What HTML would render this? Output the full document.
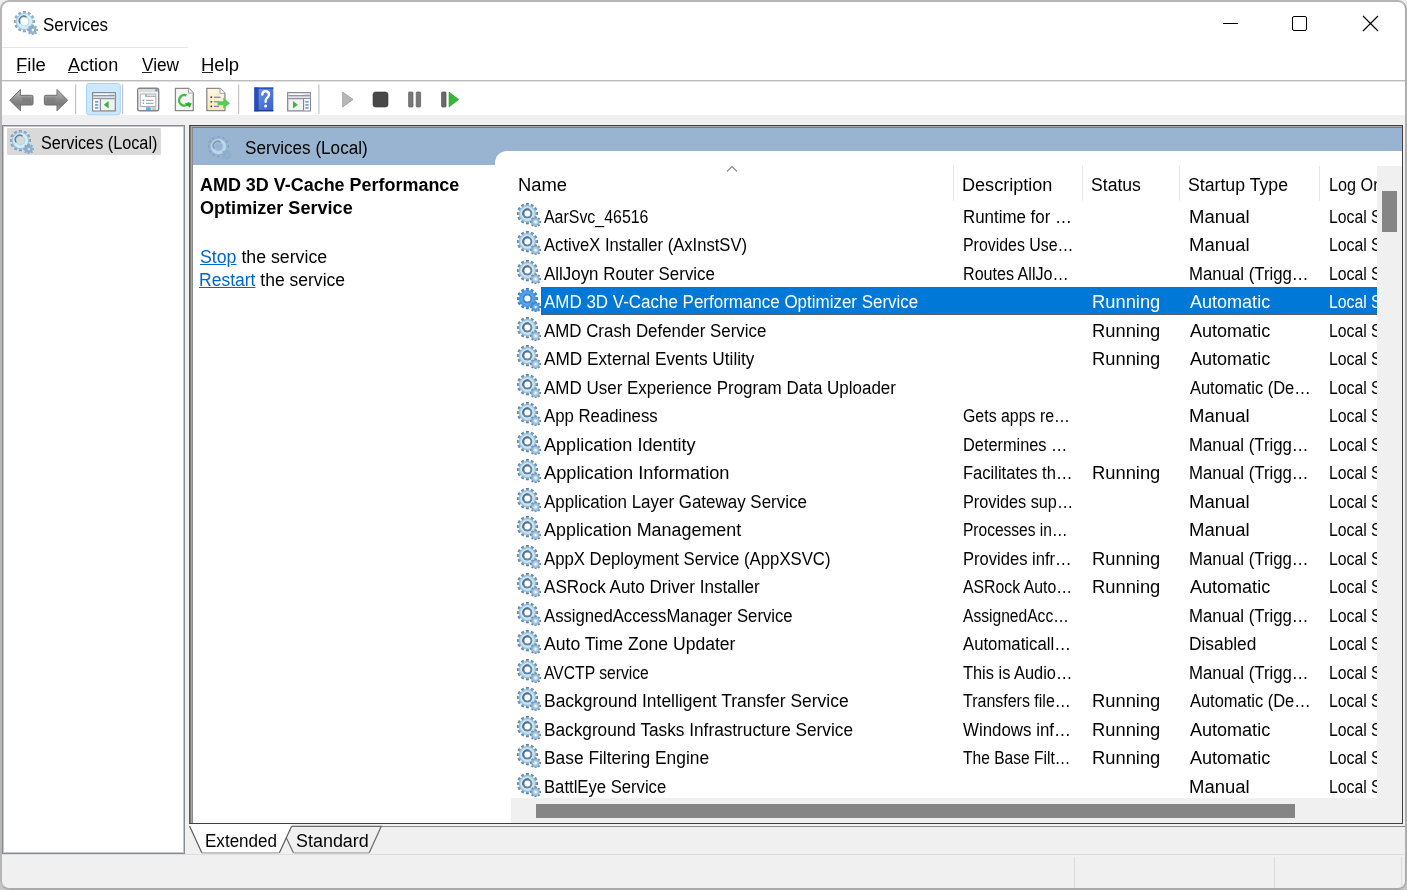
<!DOCTYPE html>
<html><head><meta charset="utf-8">
<style>
html,body{margin:0;padding:0;}
body{width:1407px;height:890px;position:relative;overflow:hidden;background:linear-gradient(#eeeeee,#c6c6c6);font-family:"Liberation Sans",sans-serif;color:#000;}
#win{position:absolute;left:0;top:0;width:1407px;height:890px;border-radius:9px;overflow:hidden;background:#f0f0f0;}
#frame{position:absolute;left:0;top:0;width:1407px;height:890px;box-sizing:border-box;border:2px solid #b6b6b6;border-bottom-color:#a9a9a9;border-right-color:#adadad;border-radius:9px;pointer-events:none;}
.abs{position:absolute;}
.t{position:absolute;white-space:nowrap;font-size:18px;line-height:20px;transform:scaleX(.94);transform-origin:0 0;}
svg.g{position:absolute;}
#titlebar{position:absolute;left:0;top:0;width:1407px;height:81px;background:#fff;}
.ul{position:absolute;height:1px;background:#000;}
.sep{position:absolute;width:1px;background:#cfcfcf;}
#toolbar{position:absolute;left:0;top:82px;width:1407px;height:33px;background:#fff;}
#tree{position:absolute;left:2px;top:125px;width:183px;height:729px;box-sizing:border-box;border:1px solid #868c96;box-shadow:inset 0 0 0 1px #c4c8ce;background:#fff;}
#rp{position:absolute;left:189px;top:125px;width:1214px;height:699px;box-sizing:border-box;border:1px solid #3f3f3f;border-left-color:#5a5a5a;background:#fff;}
#rpin{position:absolute;left:0;top:0;right:0;bottom:0;border-left:2px solid #a0a0a0;border-top:2px solid #a0a0a0;box-shadow:inset 1px 1px 0 #8a8a8a;}
#hdr{position:absolute;left:193px;top:128px;width:1209px;height:37px;background:#99b4d1;}
#tabw{position:absolute;left:495px;top:151px;width:907px;height:672px;background:#fff;border-top-left-radius:12px;}
.colhd{position:absolute;top:166px;height:35px;width:1px;background:#e5e5e5;}
#list{position:absolute;left:511px;top:0;width:866px;height:798px;overflow:hidden;}
.row{position:absolute;left:0;width:866px;height:28.5px;}
.ricon{position:absolute;left:6px;top:1px;}
.row .c{position:absolute;top:5px;white-space:nowrap;font-size:18px;line-height:20px;transform:scaleX(.94);transform-origin:0 0;}
.cn{left:33px;}
.cd{left:452px;}
.cs{left:581px;}
.ct{left:677.5px;}
.cl{left:818px;transform:scaleX(.877)!important;}
.hl{position:absolute;left:30px;top:0;width:840px;height:28px;background:#0078d7;box-sizing:border-box;border:1px dotted #5a5a5a;}
.sel .c{color:#fff;}
#vs{position:absolute;left:1377px;top:166px;width:25px;height:632px;background:#f0f0f0;}
#vthumb{position:absolute;left:1382px;top:191px;width:15px;height:41px;background:#858585;}
#hs{position:absolute;left:511px;top:798px;width:891px;height:25px;background:#f0f0f0;}
#hthumb{position:absolute;left:536px;top:804px;width:759px;height:14px;background:#858585;}
a{color:#0066cc;text-decoration:underline;}
</style></head><body>
<svg width="0" height="0" style="position:absolute">
<defs>
<radialGradient id="gb" gradientUnits="userSpaceOnUse" cx="10.4" cy="10.6" r="10.7">
<stop offset="0" stop-color="#ffffff"/><stop offset="0.48" stop-color="#d4eefa"/><stop offset="0.64" stop-color="#bde0f1"/><stop offset="0.8" stop-color="#84a8c8"/><stop offset="1" stop-color="#4a709a"/>
</radialGradient>
<radialGradient id="gs" gradientUnits="userSpaceOnUse" cx="18.6" cy="19.0" r="5.5">
<stop offset="0" stop-color="#ffffff"/><stop offset="0.25" stop-color="#c4dcec"/><stop offset="0.7" stop-color="#86a8c8"/><stop offset="1" stop-color="#4a709a"/>
</radialGradient>
<radialGradient id="gsel" gradientUnits="userSpaceOnUse" cx="10.4" cy="10.6" r="10.7">
<stop offset="0" stop-color="#ffffff"/><stop offset="0.5" stop-color="#5fa8ea"/><stop offset="0.8" stop-color="#3f90dc"/><stop offset="1" stop-color="#2a78c8"/>
</radialGradient>
<radialGradient id="gssel" gradientUnits="userSpaceOnUse" cx="18.6" cy="19.0" r="5.5">
<stop offset="0" stop-color="#ffffff"/><stop offset="0.3" stop-color="#6aaee8"/><stop offset="1" stop-color="#2a78c8"/>
</radialGradient>
<g id="gear">
<path d="M8.94,2.33 L8.91,0.00 L11.89,0.00 L11.86,2.33 L13.27,2.71 L14.41,0.68 L16.99,2.17 L15.80,4.17 L16.83,5.20 L18.83,4.01 L20.32,6.59 L18.29,7.73 L18.67,9.14 L21.00,9.11 L21.00,12.09 L18.67,12.06 L18.29,13.47 L20.32,14.61 L18.83,17.19 L16.83,16.00 L15.80,17.03 L16.99,19.03 L14.41,20.52 L13.27,18.49 L11.86,18.87 L11.89,21.20 L8.91,21.20 L8.94,18.87 L7.53,18.49 L6.39,20.52 L3.81,19.03 L5.00,17.03 L3.97,16.00 L1.97,17.19 L0.48,14.61 L2.51,13.47 L2.13,12.06 L-0.20,12.09 L-0.20,9.11 L2.13,9.14 L2.51,7.73 L0.48,6.59 L1.97,4.01 L3.97,5.20 L5.00,4.17 L3.81,2.17 L6.39,0.68 L7.53,2.71Z" fill="url(#gb)"/>
<circle cx="10.4" cy="10.6" r="5" fill="#6584a4"/>
<path d="M6.2,12.2 A4.6,4.6 0 0 1 12,6.2" fill="none" stroke="#4e6684" stroke-width="1.2"/>
<circle cx="10.4" cy="10.6" r="3" fill="#fff"/>
<path d="M17.46,15.27 L17.64,13.58 L19.56,13.58 L19.74,15.27 L20.43,15.56 L21.75,14.49 L23.11,15.85 L22.04,17.17 L22.33,17.86 L24.02,18.04 L24.02,19.96 L22.33,20.14 L22.04,20.83 L23.11,22.15 L21.75,23.51 L20.43,22.44 L19.74,22.73 L19.56,24.42 L17.64,24.42 L17.46,22.73 L16.77,22.44 L15.45,23.51 L14.09,22.15 L15.16,20.83 L14.87,20.14 L13.18,19.96 L13.18,18.04 L14.87,17.86 L15.16,17.17 L14.09,15.85 L15.45,14.49 L16.77,15.56Z" fill="url(#gs)"/>
<circle cx="18.6" cy="19.0" r="0.9" fill="#fff"/>
</g>
<g id="gearsel">
<path d="M8.94,2.33 L8.91,0.00 L11.89,0.00 L11.86,2.33 L13.27,2.71 L14.41,0.68 L16.99,2.17 L15.80,4.17 L16.83,5.20 L18.83,4.01 L20.32,6.59 L18.29,7.73 L18.67,9.14 L21.00,9.11 L21.00,12.09 L18.67,12.06 L18.29,13.47 L20.32,14.61 L18.83,17.19 L16.83,16.00 L15.80,17.03 L16.99,19.03 L14.41,20.52 L13.27,18.49 L11.86,18.87 L11.89,21.20 L8.91,21.20 L8.94,18.87 L7.53,18.49 L6.39,20.52 L3.81,19.03 L5.00,17.03 L3.97,16.00 L1.97,17.19 L0.48,14.61 L2.51,13.47 L2.13,12.06 L-0.20,12.09 L-0.20,9.11 L2.13,9.14 L2.51,7.73 L0.48,6.59 L1.97,4.01 L3.97,5.20 L5.00,4.17 L3.81,2.17 L6.39,0.68 L7.53,2.71Z" fill="url(#gsel)"/>
<circle cx="10.4" cy="10.6" r="5" fill="#3c86d2"/>
<circle cx="10.4" cy="10.6" r="3" fill="#fff"/>
<path d="M17.46,15.27 L17.64,13.58 L19.56,13.58 L19.74,15.27 L20.43,15.56 L21.75,14.49 L23.11,15.85 L22.04,17.17 L22.33,17.86 L24.02,18.04 L24.02,19.96 L22.33,20.14 L22.04,20.83 L23.11,22.15 L21.75,23.51 L20.43,22.44 L19.74,22.73 L19.56,24.42 L17.64,24.42 L17.46,22.73 L16.77,22.44 L15.45,23.51 L14.09,22.15 L15.16,20.83 L14.87,20.14 L13.18,19.96 L13.18,18.04 L14.87,17.86 L15.16,17.17 L14.09,15.85 L15.45,14.49 L16.77,15.56Z" fill="url(#gssel)"/>
<circle cx="18.6" cy="19.0" r="0.9" fill="#fff"/>
</g>
<mask id="hm" maskUnits="userSpaceOnUse" x="0" y="0" width="24" height="24"><rect width="24" height="24" fill="#fff"/><circle cx="10.5" cy="10.5" r="3.8" fill="#000"/><circle cx="18.9" cy="19.1" r="1.3" fill="#000"/></mask>
<radialGradient id="g2b" gradientUnits="userSpaceOnUse" cx="10.5" cy="10.5" r="10.5">
<stop offset="0" stop-color="#a8c4dc"/><stop offset="0.6" stop-color="#b8dcee"/><stop offset="0.8" stop-color="#8fb2d2"/><stop offset="1" stop-color="#6488b0"/>
</radialGradient>
<g id="gear2" mask="url(#hm)">
<path d="M8.94,2.33 L8.91,0.00 L11.89,0.00 L11.86,2.33 L13.27,2.71 L14.41,0.68 L16.99,2.17 L15.80,4.17 L16.83,5.20 L18.83,4.01 L20.32,6.59 L18.29,7.73 L18.67,9.14 L21.00,9.11 L21.00,12.09 L18.67,12.06 L18.29,13.47 L20.32,14.61 L18.83,17.19 L16.83,16.00 L15.80,17.03 L16.99,19.03 L14.41,20.52 L13.27,18.49 L11.86,18.87 L11.89,21.20 L8.91,21.20 L8.94,18.87 L7.53,18.49 L6.39,20.52 L3.81,19.03 L5.00,17.03 L3.97,16.00 L1.97,17.19 L0.48,14.61 L2.51,13.47 L2.13,12.06 L-0.20,12.09 L-0.20,9.11 L2.13,9.14 L2.51,7.73 L0.48,6.59 L1.97,4.01 L3.97,5.20 L5.00,4.17 L3.81,2.17 L6.39,0.68 L7.53,2.71Z" fill="url(#g2b)" fill-opacity="0.85"/>
<circle cx="10.5" cy="10.5" r="6.3" fill="none" stroke="#d2f0fa" stroke-width="2.6"/>
<path d="M6.3,12.5 A4.4,4.4 0 0 1 12.5,6.3" fill="none" stroke="#66788a" stroke-width="1.4"/>
<path d="M17.46,15.27 L17.64,13.58 L19.56,13.58 L19.74,15.27 L20.43,15.56 L21.75,14.49 L23.11,15.85 L22.04,17.17 L22.33,17.86 L24.02,18.04 L24.02,19.96 L22.33,20.14 L22.04,20.83 L23.11,22.15 L21.75,23.51 L20.43,22.44 L19.74,22.73 L19.56,24.42 L17.64,24.42 L17.46,22.73 L16.77,22.44 L15.45,23.51 L14.09,22.15 L15.16,20.83 L14.87,20.14 L13.18,19.96 L13.18,18.04 L14.87,17.86 L15.16,17.17 L14.09,15.85 L15.45,14.49 L16.77,15.56Z" fill="#86a8c8" fill-opacity="0.9"/>
</g>
</defs>
</svg>
<div id="win">
<div id="titlebar"></div>
<svg class="g" style="left:14px;top:11px" width="24" height="24" viewBox="0 0 24 24"><use href="#gear2"/></svg>
<div class="t" style="left:43px;top:14.7px;transform:scaleX(.943)">Services</div>
<!-- window controls -->
<div class="abs" style="left:1223px;top:23px;width:15px;height:1px;background:#000"></div>
<div class="abs" style="left:1292px;top:16px;width:15px;height:15px;box-sizing:border-box;border:1px solid #000;border-radius:2px"></div>
<svg class="g" style="left:1362px;top:15px" width="17" height="17" viewBox="0 0 17 17"><path d="M1,1 L16,16 M16,1 L1,16" stroke="#000" stroke-width="1.2"/></svg>
<div class="abs" style="left:2px;top:47px;width:186px;height:1px;background:#e6e6e6"></div>
<!-- menu -->
<div class="t" style="left:16px;top:54.7px;transform:scaleX(1.03)">File</div>
<div class="t" style="left:68px;top:54.7px;transform:scaleX(1.003)">Action</div>
<div class="t" style="left:141.5px;top:54.7px;transform:scaleX(.956)">View</div>
<div class="t" style="left:201px;top:54.7px;transform:scaleX(1.028)">Help</div>
<div class="ul" style="left:17px;top:72px;width:9px;background:#222"></div>
<div class="ul" style="left:68px;top:72px;width:10px;background:#222"></div>
<div class="ul" style="left:142px;top:72px;width:10px;background:#222"></div>
<div class="ul" style="left:202px;top:72px;width:11px;background:#222"></div>
<div class="abs" style="left:0;top:80px;width:1407px;height:1px;background:#bcbcbc"></div>
<div class="abs" style="left:0;top:81px;width:1407px;height:1px;background:#e2e2e2"></div>
<div id="toolbar"></div>
<svg class="g" style="left:0;top:82px" width="480" height="34" viewBox="0 82 480 34">
<defs>
<linearGradient id="arr" x1="0" y1="0" x2="0" y2="1"><stop offset="0" stop-color="#c4c4c4"/><stop offset="0.45" stop-color="#8e8e8e"/><stop offset="0.7" stop-color="#7a7a7a"/><stop offset="1" stop-color="#a8a8a8"/></linearGradient>
<linearGradient id="hlp" x1="0" y1="0" x2="1" y2="1"><stop offset="0" stop-color="#6e97e8"/><stop offset="1" stop-color="#3560c8"/></linearGradient>
<linearGradient id="pg" x1="0" y1="0" x2="0" y2="1"><stop offset="0" stop-color="#fdf8e4"/><stop offset="1" stop-color="#f6e8b8"/></linearGradient>
</defs>
<!-- back arrow -->
<path d="M9.8,100.2 L20.4,89.5 L20.4,95.3 L31.6,95.3 Q33,95.3 33,96.7 L33,103.6 Q33,105 31.6,105 L20.4,105 L20.4,110.8 Z" fill="url(#arr)" stroke="#6c6c6c" stroke-width="1" stroke-linejoin="round"/>
<path d="M22,97.5 L31,97.5 L31,102.5 L22,102.5 Z" fill="#707070" opacity="0.45"/>
<!-- forward arrow -->
<path d="M67.6,100.2 L57,89.5 L57,95.3 L45.8,95.3 Q44.4,95.3 44.4,96.7 L44.4,103.6 Q44.4,105 45.8,105 L57,105 L57,110.8 Z" fill="url(#arr)" stroke="#6c6c6c" stroke-width="1" stroke-linejoin="round"/>
<path d="M46.5,97.5 L55.5,97.5 L55.5,102.5 L46.5,102.5 Z" fill="#707070" opacity="0.35"/>
<rect x="75" y="84.5" width="1.2" height="29.5" fill="#c4c4c4"/>
<!-- highlighted button -->
<rect x="86.5" y="83.5" width="33.8" height="31.3" rx="2.5" fill="#cce8ff" stroke="#a4d4fb" stroke-width="1"/>
<!-- icon1: console tree -->
<rect x="92.7" y="92.7" width="22.6" height="18.2" fill="#f2f2f2" stroke="#7c838e" stroke-width="1.2"/>
<rect x="93.3" y="93.3" width="21.4" height="5.4" fill="#dfe3e8"/>
<rect x="93.3" y="95.2" width="21.4" height="1" fill="#7c838e"/>
<rect x="93.3" y="98.2" width="21.4" height="1" fill="#7c838e"/>
<rect x="94.5" y="93.9" width="14" height="0.9" fill="#ffffff"/>
<rect x="93.3" y="99.2" width="6.5" height="11.1" fill="#fafafa"/>
<rect x="99.8" y="99.2" width="1.1" height="11.2" fill="#7c838e"/>
<rect x="95" y="101.2" width="3.3" height="1.3" fill="#4a7fc8"/>
<rect x="95" y="104.3" width="3.3" height="1.3" fill="#4a7fc8"/>
<rect x="95" y="107.3" width="3.3" height="1.3" fill="#4a7fc8"/>
<path d="M103.8,104.8 L108.6,101 L108.6,108.6 Z" fill="#3cb43c"/>
<rect x="122" y="84.5" width="1.2" height="29.5" fill="#c4c4c4"/>
<!-- icon2: properties -->
<rect x="137.7" y="88.2" width="21" height="22.6" rx="2" fill="#f4f4f4" stroke="#858585" stroke-width="1.4"/>
<rect x="138.5" y="89" width="19.4" height="3" fill="#dcdcdc"/>
<rect x="155.5" y="89.3" width="2" height="2" fill="#5a7ab8"/>
<path d="M140.3,94 L145.5,94 L145.5,96.5 L155.8,96.5 L155.8,106.5 L140.3,106.5 Z" fill="#fff" stroke="#a9acb8" stroke-width="1"/>
<rect x="146.3" y="94" width="9.5" height="2.5" fill="#dfe2ea" stroke="#a9acb8" stroke-width="0.8"/>
<circle cx="143.5" cy="100.3" r="0.9" fill="#34b8f0"/>
<rect x="146" y="99.8" width="7.5" height="1" fill="#9a9a9a"/>
<circle cx="143.5" cy="103.3" r="0.7" fill="#8a8a8a"/>
<rect x="146" y="102.8" width="7.5" height="1" fill="#9a9a9a"/>
<rect x="146" y="107.2" width="4.8" height="2.8" fill="#38c0f0"/>
<rect x="151.5" y="107.2" width="4.5" height="2.8" fill="#c8c8c8"/>
<!-- icon3: refresh -->
<path d="M175.4,88.4 L188.6,88.4 L193.3,93.1 L193.3,110.6 L175.4,110.6 Z" fill="#f6f6f6" stroke="#8a8a8a" stroke-width="1.3"/>
<path d="M188.6,88.4 L188.6,93.1 L193.3,93.1" fill="#fff" stroke="#9a9a9a" stroke-width="0.9"/>
<path d="M189.2,102.5 A5.3,5.3 0 1 1 186.5,95.4" fill="none" stroke="#3cbf3c" stroke-width="2.4"/>
<path d="M184.5,103.2 L191.8,103.2 L189.8,107.6 Z" fill="#22b022"/>
<!-- icon4: export -->
<path d="M206.8,88.4 L220,88.4 L224.9,93.3 L224.9,110.6 L206.8,110.6 Z" fill="url(#pg)" stroke="#8a8a8a" stroke-width="1.3"/>
<path d="M220,88.4 L220,93.3 L224.9,93.3" fill="#fff" stroke="#9a9a9a" stroke-width="0.9"/>
<circle cx="211.3" cy="97.2" r="0.9" fill="#333"/><rect x="214" y="96.7" width="6.5" height="1.1" fill="#7a74a8"/>
<circle cx="211.3" cy="101.8" r="0.9" fill="#333"/><rect x="214" y="101.3" width="5" height="1.1" fill="#7a74a8"/>
<circle cx="211.3" cy="106.3" r="0.9" fill="#333"/><rect x="214" y="105.8" width="5" height="1.1" fill="#7a74a8"/>
<path d="M217.5,101.3 L223.3,101.3 L223.3,97.8 L230,103.2 L223.3,108.6 L223.3,105.2 L217.5,105.2 Z" fill="#58cc58"/>
<rect x="238" y="84.5" width="1.2" height="29.5" fill="#c4c4c4"/>
<!-- help -->
<rect x="254.3" y="87.5" width="19" height="23.8" fill="url(#hlp)"/>
<rect x="254.3" y="87.5" width="4.3" height="23.8" fill="#2c4cb4"/>
<rect x="254.3" y="87.5" width="19" height="1.3" fill="#2244c4"/>
<rect x="254.3" y="110" width="19" height="1.3" fill="#2a3a80"/>
<path d="M262.3,94.5 Q262.6,91.3 265.6,91.3 Q269,91.3 269,94.6 Q269,96.6 266.8,98.2 Q265.6,99.2 265.6,101.8" fill="none" stroke="#fff" stroke-width="2.4" stroke-linecap="round"/>
<circle cx="265.6" cy="106" r="1.5" fill="#fff"/>
<!-- icon6 -->
<rect x="287.7" y="92.7" width="22.6" height="18.2" fill="#f2f2f2" stroke="#7c838e" stroke-width="1.2"/>
<rect x="288.3" y="93.3" width="21.4" height="5.4" fill="#dfe3e8"/>
<rect x="288.3" y="95.2" width="21.4" height="1" fill="#7c838e"/>
<rect x="288.3" y="98.2" width="21.4" height="1" fill="#7c838e"/>
<rect x="289.5" y="93.9" width="14" height="0.9" fill="#ffffff"/>
<rect x="303.8" y="99.2" width="6" height="11.1" fill="#fafafa"/>
<rect x="303" y="99.2" width="1.1" height="11.2" fill="#7c838e"/>
<rect x="305.3" y="101.2" width="3.3" height="1.3" fill="#4a7fc8"/>
<rect x="305.3" y="104.3" width="3.3" height="1.3" fill="#4a7fc8"/>
<rect x="305.3" y="107.3" width="3.3" height="1.3" fill="#4a7fc8"/>
<path d="M293,101 L297.8,104.8 L293,108.6 Z" fill="#3cb43c"/>
<rect x="318.3" y="84.5" width="1.2" height="29.5" fill="#c4c4c4"/>
<!-- play gray -->
<path d="M342.6,92 L353,99.5 L342.6,107 Z" fill="#b8b8b8" stroke="#9c9c9c" stroke-width="0.8" stroke-linejoin="round"/>
<!-- stop -->
<rect x="373" y="92" width="15" height="15" rx="2.5" fill="#484848" stroke="#383838" stroke-width="0.6"/>
<!-- pause -->
<rect x="408.6" y="92" width="4.4" height="15" rx="0.8" fill="#787878" stroke="#5c5c5c" stroke-width="0.7"/>
<rect x="416.2" y="92" width="4.4" height="15" rx="0.8" fill="#787878" stroke="#5c5c5c" stroke-width="0.7"/>
<!-- restart -->
<rect x="441.6" y="92" width="4.4" height="15" rx="0.8" fill="#6a6a6a" stroke="#4c4c4c" stroke-width="0.7"/>
<path d="M449,92 L458.8,99.5 L449,107 Z" fill="#36b836" stroke="#26a326" stroke-width="0.6" stroke-linejoin="round"/>
</svg>

<!-- tree -->
<div id="tree"></div>
<div class="abs" style="left:7px;top:128px;width:154px;height:27px;background:#d9d9d9;border-radius:1px"></div>
<svg class="g" style="left:9.5px;top:129.5px" width="24" height="24" viewBox="0 0 24 24"><use href="#gear2"/></svg>
<div class="t" style="left:41px;top:133.2px;transform:scaleX(.902)">Services (Local)</div>
<!-- right panel -->
<div id="rp"></div>
<div class="abs" style="left:190px;top:126px;width:1212px;height:1px;background:#a8a8a8"></div>
<div class="abs" style="left:191px;top:127px;width:1211px;height:1px;background:#7c7c7c"></div>
<div class="abs" style="left:190px;top:126px;width:1px;height:697px;background:#7a7a7a"></div>
<div class="abs" style="left:191px;top:127px;width:1px;height:696px;background:#a8a8a8"></div>
<div class="abs" style="left:192px;top:128px;width:1px;height:695px;background:#8a8a8a"></div>
<div id="hdr"></div>
<svg class="g" style="left:207.5px;top:135.5px;opacity:0.6" width="24" height="24" viewBox="0 0 24 24"><use href="#gear2"/></svg>
<div class="t" style="left:245px;top:137.7px;transform:scaleX(.951)">Services (Local)</div>
<div id="tabw"></div>
<div class="t" style="left:200px;top:174.7px;font-weight:bold;transform:scaleX(.997)">AMD 3D V-Cache Performance</div>
<div class="t" style="left:200px;top:197.6px;font-weight:bold;transform:scaleX(1.004)">Optimizer Service</div>
<div class="t" style="left:200px;top:247.2px;transform:scaleX(.985)"><a>Stop</a> the service</div>
<div class="t" style="left:198.5px;top:269.5px;transform:scaleX(.973)"><a>Restart</a> the service</div>
<!-- list header -->
<div class="t" style="left:518px;top:174.6px;transform:scaleX(1.02)">Name</div>
<div class="t" style="left:962px;top:174.6px;transform:scaleX(1.004)">Description</div>
<div class="t" style="left:1091px;top:174.6px;transform:scaleX(.978)">Status</div>
<div class="t" style="left:1188px;top:174.6px;transform:scaleX(.983)">Startup Type</div>
<div class="abs" style="left:1329px;top:170px;width:48px;height:30px;overflow:hidden"><div class="t" style="left:0;top:4.6px;transform:scaleX(.9)">Log On As</div></div>
<svg class="g" style="left:726px;top:165px" width="12" height="8" viewBox="0 0 12 8"><path d="M1,6.5 L6,1.5 L11,6.5" fill="none" stroke="#8a8a8a" stroke-width="1.1"/></svg>
<div class="colhd" style="left:953px"></div>
<div class="colhd" style="left:1082px"></div>
<div class="colhd" style="left:1179px"></div>
<div class="colhd" style="left:1319px"></div>
<div id="list">
<div class="row" style="top:201.70px"><svg class="ricon" width="24" height="24" viewBox="0 0 24 24"><use href="#gear"/></svg><span class="c cn" style="transform:scaleX(0.8845)">AarSvc_46516</span><span class="c cd" style="transform:scaleX(0.9382)">Runtime for …</span><span class="c ct" style="transform:scaleX(1.0270)">Manual</span><span class="c cl">Local S</span></div>
<div class="row" style="top:230.20px"><svg class="ricon" width="24" height="24" viewBox="0 0 24 24"><use href="#gear"/></svg><span class="c cn" style="transform:scaleX(0.9227)">ActiveX Installer (AxInstSV)</span><span class="c cd" style="transform:scaleX(0.8839)">Provides Use…</span><span class="c ct" style="transform:scaleX(1.0270)">Manual</span><span class="c cl">Local S</span></div>
<div class="row" style="top:258.70px"><svg class="ricon" width="24" height="24" viewBox="0 0 24 24"><use href="#gear"/></svg><span class="c cn" style="transform:scaleX(0.9389)">AllJoyn Router Service</span><span class="c cd" style="transform:scaleX(0.8947)">Routes AllJo…</span><span class="c ct" style="transform:scaleX(0.9320)">Manual (Trigg…</span><span class="c cl">Local S</span></div>
<div class="row sel" style="top:287.20px"><svg class="ricon" width="24" height="24" viewBox="0 0 24 24"><use href="#gearsel"/></svg><div class="hl"></div><span class="c cn" style="transform:scaleX(0.9425)">AMD 3D V-Cache Performance Optimizer Service</span><span class="c cs" style="transform:scaleX(1.0186)">Running</span><span class="c ct" style="left:679px;transform:scaleX(1.0014)">Automatic</span><span class="c cl">Local S</span></div>
<div class="row" style="top:315.70px"><svg class="ricon" width="24" height="24" viewBox="0 0 24 24"><use href="#gear"/></svg><span class="c cn" style="transform:scaleX(0.9375)">AMD Crash Defender Service</span><span class="c cs" style="transform:scaleX(1.0186)">Running</span><span class="c ct" style="left:679px;transform:scaleX(1.0014)">Automatic</span><span class="c cl">Local S</span></div>
<div class="row" style="top:344.20px"><svg class="ricon" width="24" height="24" viewBox="0 0 24 24"><use href="#gear"/></svg><span class="c cn" style="transform:scaleX(0.9563)">AMD External Events Utility</span><span class="c cs" style="transform:scaleX(1.0186)">Running</span><span class="c ct" style="left:679px;transform:scaleX(1.0014)">Automatic</span><span class="c cl">Local S</span></div>
<div class="row" style="top:372.70px"><svg class="ricon" width="24" height="24" viewBox="0 0 24 24"><use href="#gear"/></svg><span class="c cn" style="transform:scaleX(0.9432)">AMD User Experience Program Data Uploader</span><span class="c ct" style="left:679px;transform:scaleX(0.9138)">Automatic (De…</span><span class="c cl">Local S</span></div>
<div class="row" style="top:401.20px"><svg class="ricon" width="24" height="24" viewBox="0 0 24 24"><use href="#gear"/></svg><span class="c cn" style="transform:scaleX(0.9309)">App Readiness</span><span class="c cd" style="transform:scaleX(0.8833)">Gets apps re…</span><span class="c ct" style="transform:scaleX(1.0270)">Manual</span><span class="c cl">Local S</span></div>
<div class="row" style="top:429.70px"><svg class="ricon" width="24" height="24" viewBox="0 0 24 24"><use href="#gear"/></svg><span class="c cn" style="transform:scaleX(1.0035)">Application Identity</span><span class="c cd" style="transform:scaleX(0.9078)">Determines …</span><span class="c ct" style="transform:scaleX(0.9320)">Manual (Trigg…</span><span class="c cl">Local S</span></div>
<div class="row" style="top:458.20px"><svg class="ricon" width="24" height="24" viewBox="0 0 24 24"><use href="#gear"/></svg><span class="c cn" style="transform:scaleX(1.0131)">Application Information</span><span class="c cd" style="transform:scaleX(0.9193)">Facilitates th…</span><span class="c cs" style="transform:scaleX(1.0186)">Running</span><span class="c ct" style="transform:scaleX(0.9320)">Manual (Trigg…</span><span class="c cl">Local S</span></div>
<div class="row" style="top:486.70px"><svg class="ricon" width="24" height="24" viewBox="0 0 24 24"><use href="#gear"/></svg><span class="c cn" style="transform:scaleX(0.9418)">Application Layer Gateway Service</span><span class="c cd" style="transform:scaleX(0.9022)">Provides sup…</span><span class="c ct" style="transform:scaleX(1.0270)">Manual</span><span class="c cl">Local S</span></div>
<div class="row" style="top:515.20px"><svg class="ricon" width="24" height="24" viewBox="0 0 24 24"><use href="#gear"/></svg><span class="c cn" style="transform:scaleX(0.9956)">Application Management</span><span class="c cd" style="transform:scaleX(0.8629)">Processes in…</span><span class="c ct" style="transform:scaleX(1.0270)">Manual</span><span class="c cl">Local S</span></div>
<div class="row" style="top:543.70px"><svg class="ricon" width="24" height="24" viewBox="0 0 24 24"><use href="#gear"/></svg><span class="c cn" style="transform:scaleX(0.9299)">AppX Deployment Service (AppXSVC)</span><span class="c cd" style="transform:scaleX(0.9209)">Provides infr…</span><span class="c cs" style="transform:scaleX(1.0186)">Running</span><span class="c ct" style="transform:scaleX(0.9320)">Manual (Trigg…</span><span class="c cl">Local S</span></div>
<div class="row" style="top:572.20px"><svg class="ricon" width="24" height="24" viewBox="0 0 24 24"><use href="#gear"/></svg><span class="c cn" style="transform:scaleX(0.9497)">ASRock Auto Driver Installer</span><span class="c cd" style="transform:scaleX(0.8787)">ASRock Auto…</span><span class="c cs" style="transform:scaleX(1.0186)">Running</span><span class="c ct" style="left:679px;transform:scaleX(1.0014)">Automatic</span><span class="c cl">Local S</span></div>
<div class="row" style="top:600.70px"><svg class="ricon" width="24" height="24" viewBox="0 0 24 24"><use href="#gear"/></svg><span class="c cn" style="transform:scaleX(0.9273)">AssignedAccessManager Service</span><span class="c cd" style="transform:scaleX(0.8668)">AssignedAcc…</span><span class="c ct" style="transform:scaleX(0.9320)">Manual (Trigg…</span><span class="c cl">Local S</span></div>
<div class="row" style="top:629.20px"><svg class="ricon" width="24" height="24" viewBox="0 0 24 24"><use href="#gear"/></svg><span class="c cn" style="transform:scaleX(0.9763)">Auto Time Zone Updater</span><span class="c cd" style="transform:scaleX(0.9295)">Automaticall…</span><span class="c ct" style="transform:scaleX(0.9620)">Disabled</span><span class="c cl">Local S</span></div>
<div class="row" style="top:657.70px"><svg class="ricon" width="24" height="24" viewBox="0 0 24 24"><use href="#gear"/></svg><span class="c cn" style="transform:scaleX(0.8710)">AVCTP service</span><span class="c cd" style="transform:scaleX(0.9104)">This is Audio…</span><span class="c ct" style="transform:scaleX(0.9320)">Manual (Trigg…</span><span class="c cl">Local S</span></div>
<div class="row" style="top:686.20px"><svg class="ricon" width="24" height="24" viewBox="0 0 24 24"><use href="#gear"/></svg><span class="c cn" style="transform:scaleX(0.9697)">Background Intelligent Transfer Service</span><span class="c cd" style="transform:scaleX(0.8880)">Transfers file…</span><span class="c cs" style="transform:scaleX(1.0186)">Running</span><span class="c ct" style="left:679px;transform:scaleX(0.9138)">Automatic (De…</span><span class="c cl">Local S</span></div>
<div class="row" style="top:714.70px"><svg class="ricon" width="24" height="24" viewBox="0 0 24 24"><use href="#gear"/></svg><span class="c cn" style="transform:scaleX(0.9571)">Background Tasks Infrastructure Service</span><span class="c cd" style="transform:scaleX(0.9382)">Windows inf…</span><span class="c cs" style="transform:scaleX(1.0186)">Running</span><span class="c ct" style="left:679px;transform:scaleX(1.0014)">Automatic</span><span class="c cl">Local S</span></div>
<div class="row" style="top:743.20px"><svg class="ricon" width="24" height="24" viewBox="0 0 24 24"><use href="#gear"/></svg><span class="c cn" style="transform:scaleX(0.9648)">Base Filtering Engine</span><span class="c cd" style="transform:scaleX(0.8648)">The Base Filt…</span><span class="c cs" style="transform:scaleX(1.0186)">Running</span><span class="c ct" style="left:679px;transform:scaleX(1.0014)">Automatic</span><span class="c cl">Local S</span></div>
<div class="row" style="top:771.70px"><svg class="ricon" width="24" height="24" viewBox="0 0 24 24"><use href="#gear"/></svg><span class="c cn" style="transform:scaleX(0.9255)">BattlEye Service</span><span class="c ct" style="transform:scaleX(1.0270)">Manual</span><span class="c cl">Local S</span></div>
</div>
<div id="vs"></div><div id="vthumb"></div>
<div id="hs"></div><div id="hthumb"></div>
<div class="abs" style="left:381px;top:826px;width:1024px;height:1px;background:#8a8a8a"></div>
<svg class="g" style="left:180px;top:815px" width="220" height="45" viewBox="180 815 220 45">
<path d="M280.9,826.3 L381.3,826.3 L369.2,852.8 L293.4,852.8 Z" fill="#f0f0f0"/>
<path d="M293.4,852.8 L369.2,852.8" stroke="#a8a8a8" stroke-width="1.3" fill="none"/>
<path d="M280.9,826.3 L381.3,826.3 L369.2,852.8" stroke="#6a6a6a" stroke-width="1.2" fill="none"/>
<path d="M280.9,826.3 L293.4,852.8" stroke="#6a6a6a" stroke-width="1.2" fill="none"/>
<path d="M190,824 L291.6,824 L291.6,826.3 L279.4,852.8 L201.8,852.8 L189.6,826.1 Z" fill="#fff"/>
<path d="M201.8,852.8 L279.4,852.8" stroke="#a8a8a8" stroke-width="1.3" fill="none"/>
<path d="M189.6,826.1 L201.8,852.8 M279.4,852.8 L291.6,826.3" stroke="#5c5c5c" stroke-width="1.2" fill="none"/>
</svg>
<div class="t" style="left:205px;top:831px;transform:scaleX(.947)">Extended</div>
<div class="t" style="left:296px;top:831px;transform:scaleX(.996)">Standard</div>
<div class="abs" style="left:2px;top:854px;width:1403px;height:1px;background:#dddddd"></div>
<div class="abs" style="left:1074px;top:857px;width:1px;height:31px;background:#dcdcdc"></div>
<div class="abs" style="left:1274px;top:857px;width:1px;height:31px;background:#dcdcdc"></div>
<div class="abs" style="left:1401px;top:857px;width:1px;height:31px;background:#dcdcdc"></div>

</div>
<div id="frame"></div>
</body></html>
